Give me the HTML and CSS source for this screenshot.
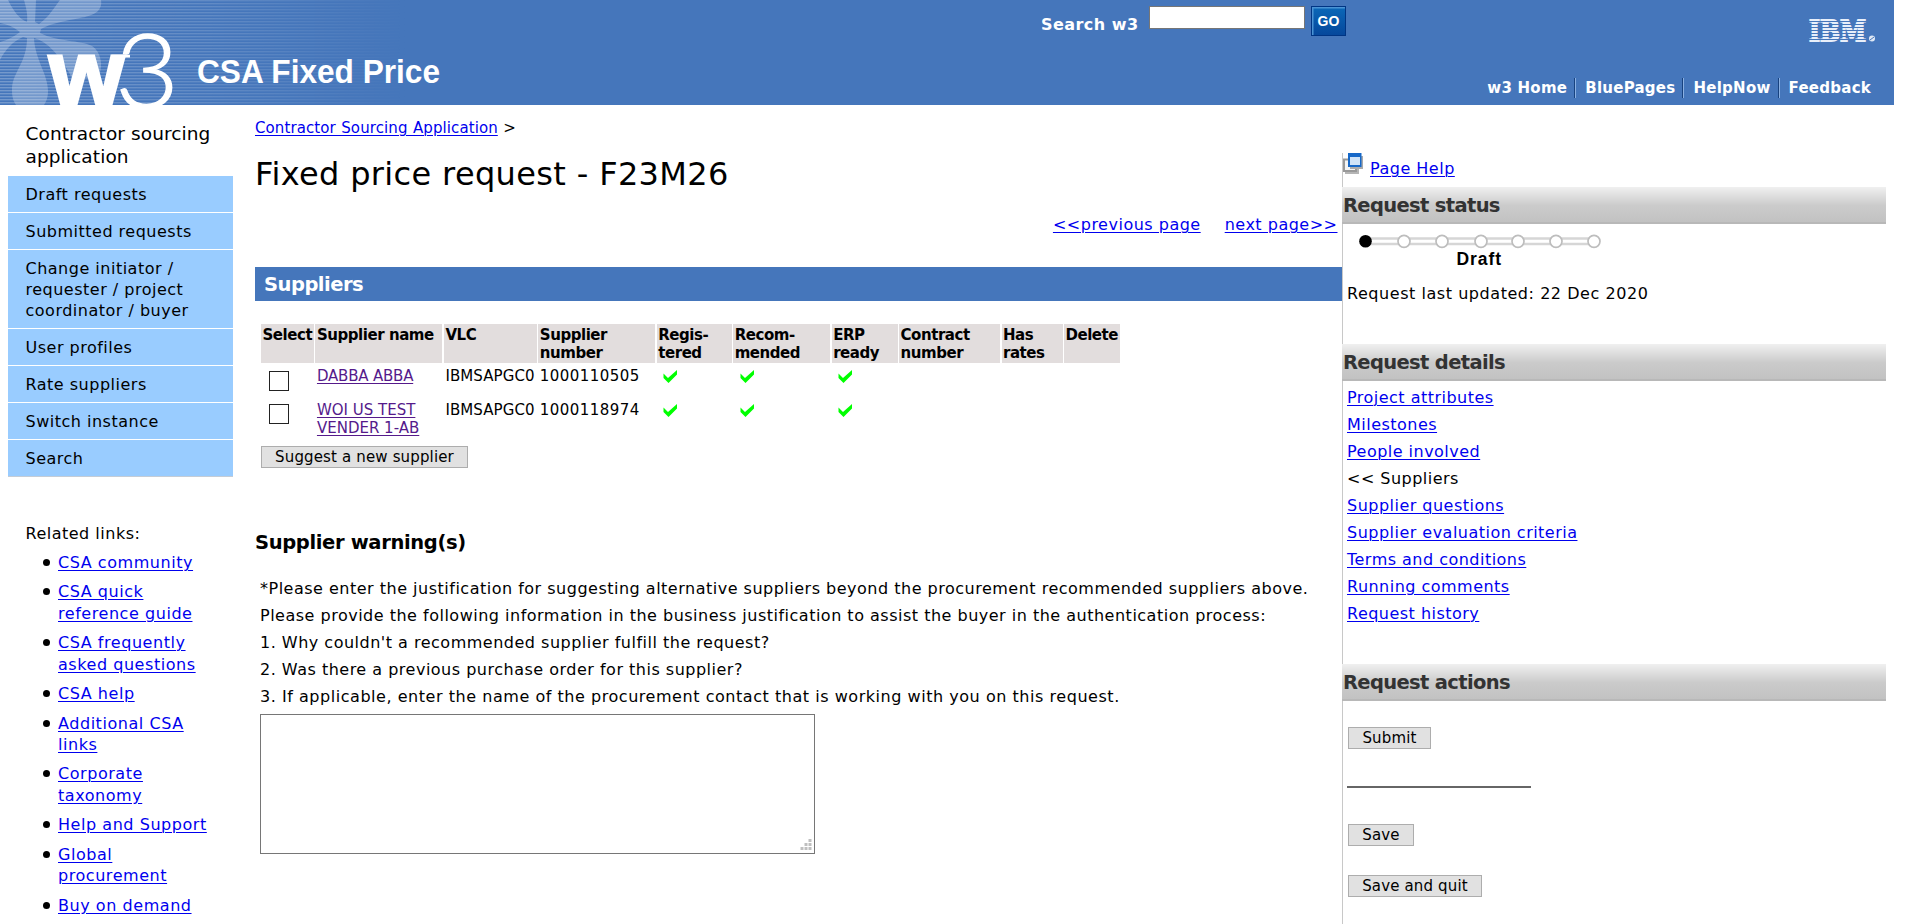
FILE: index.html
```html
<!DOCTYPE html>
<html lang="en">
<head>
<meta charset="utf-8">
<title>CSA Fixed Price - Suppliers</title>
<link rel="stylesheet" href="styles.css">
</head>
<body>
<header class="masthead">
  <svg class="brand" width="480" height="105" viewBox="0 0 480 105">
    <defs>
      <linearGradient id="fade" x1="0" x2="1" y1="0" y2="0"><stop offset="0" stop-color="#fff" stop-opacity=".26"/><stop offset=".45" stop-color="#fff" stop-opacity=".15"/><stop offset=".85" stop-color="#fff" stop-opacity="0"/></linearGradient>
      <pattern id="rows" width="4" height="3" patternUnits="userSpaceOnUse"><rect width="4" height="1.4" fill="#fff"/></pattern>
      <mask id="rowmask"><rect width="480" height="105" fill="url(#rows)"/></mask>
    </defs>
    <rect width="480" height="105" fill="url(#fade)" mask="url(#rowmask)"/>
    <path fill="#fff" fill-opacity=".25" d="M24 0H36L35 22L39 24C48 18 54 8 60 0H101C103 12 92 16 80 18C64 21 50 24 41 29L40 33C58 42 80 40 92 46C101 52 104 66 98 78H72C64 62 50 42 34 38C35 60 48 74 48 91C48 98 46 102 44 105H16C12 99 12 94 12 88C13 72 27 62 27 38L23 37C12 42 5 50 0 60V42C8 40 15 36 20 32C14 27 7 24 0 23V0H8C13 10 19 19 27 22C28 15 26 7 24 0Z"/>
    <text class="logo-w" x="49" y="105" textLength="75" lengthAdjust="spacingAndGlyphs">w</text>
    <path d="M112 54.800H130V57.500H112Z" fill="#fff"/>
    <text class="logo-3" x="115" y="107.500" textLength="64" lengthAdjust="spacingAndGlyphs">3</text>
    <text class="app-name" x="197" y="83" textLength="243" lengthAdjust="spacingAndGlyphs">CSA Fixed Price</text>
  </svg>
  <form class="search"><label for="q">Search w3</label><input id="q" type="text"><button class="go" type="button">GO</button></form>
  <div class="mast-right">
    <svg class="ibm-logo" width="68" height="24" viewBox="0 0 68 24">
      <text class="ibm" x="1" y="22" textLength="57" lengthAdjust="spacingAndGlyphs">IBM</text>
      <circle cx="64" cy="19.500" r="3" fill="#dfe8f5"/>
      <path d="M0 2.500H59M0 5.500H59M0 8.500H59M0 11.500H59M0 14.500H59M0 17.500H59M0 20.500H59M62 21L66 18" stroke="#4576bb" stroke-width="1"/>
    </svg>
    <nav class="mast-links"><a>w3 Home</a><a>BluePages</a><a>HelpNow</a><a>Feedback</a></nav>
  </div>
</header>
<div class="page">
  <aside class="left">
    <h2 class="app-title">Contractor sourcing application</h2>
    <ul class="menu">
      <li>Draft requests</li><li>Submitted requests</li><li>Change initiator /<br>requester / project<br>coordinator / buyer</li><li>User profiles</li><li>Rate suppliers</li><li>Switch instance</li><li>Search</li>
    </ul>
    <p class="related-title">Related links:</p>
    <ul class="related">
      <li><a href="#">CSA community</a></li>
      <li><a href="#">CSA quick<br>reference guide</a></li>
      <li><a href="#">CSA frequently<br>asked questions</a></li>
      <li><a href="#">CSA help</a></li>
      <li><a href="#">Additional CSA<br>links</a></li>
      <li><a href="#">Corporate<br>taxonomy</a></li>
      <li><a href="#">Help and Support</a></li>
      <li><a href="#">Global<br>procurement</a></li>
      <li><a href="#">Buy on demand</a></li>
    </ul>
  </aside>
  <main class="main">
    <p class="crumb"><a href="#">Contractor Sourcing Application</a> &gt;</p>
    <h1>Fixed price request - F23M26</h1>
    <p class="pager"><a href="#">&lt;&lt;previous page</a><a href="#">next page&gt;&gt;</a></p>
    <h2 class="bar">Suppliers</h2>
    <div class="grid">
      <div class="row head"><span>Select</span><span>Supplier name</span><span>VLC</span><span>Supplier<br>number</span><span>Regis-<br>tered</span><span>Recom-<br>mended</span><span>ERP<br>ready</span><span>Contract<br>number</span><span>Has<br>rates</span><span>Delete</span></div>
      <div class="row one"><span><i class="box"></i></span><span><a class="seen" href="#">DABBA ABBA</a></span><span class="vlc">IBMSAPGC0</span><span class="num">1000110505</span>
        <span><svg class="tick" viewBox="0 0 24 24"><path d="M4.500 7.500L9 12L18 4V8.500L9.500 17L4.500 12Z"/></svg></span>
        <span><svg class="tick" viewBox="0 0 24 24"><path d="M4.500 7.500L9 12L18 4V8.500L9.500 17L4.500 12Z"/></svg></span>
        <span><svg class="tick" viewBox="0 0 24 24"><path d="M4.500 7.500L9 12L18 4V8.500L9.500 17L4.500 12Z"/></svg></span></div>
      <div class="row two"><span><i class="box"></i></span><span><a class="seen" href="#">WOI US TEST<br>VENDER 1-AB</a></span><span class="vlc">IBMSAPGC0</span><span class="num">1000118974</span>
        <span><svg class="tick" viewBox="0 0 24 24"><path d="M4.500 7.500L9 12L18 4V8.500L9.500 17L4.500 12Z"/></svg></span>
        <span><svg class="tick" viewBox="0 0 24 24"><path d="M4.500 7.500L9 12L18 4V8.500L9.500 17L4.500 12Z"/></svg></span>
        <span><svg class="tick" viewBox="0 0 24 24"><path d="M4.500 7.500L9 12L18 4V8.500L9.500 17L4.500 12Z"/></svg></span></div>
    </div>
    <button class="btn suggest" type="button">Suggest a new supplier</button>
    <h3>Supplier warning(s)</h3>
    <div class="notes">
      <p>*Please enter the justification for suggesting alternative suppliers beyond the procurement recommended suppliers above.</p>
      <p>Please provide the following information in the business justification to assist the buyer in the authentication process:</p>
      <p>1. Why couldn't a recommended supplier fulfill the request?</p>
      <p>2. Was there a previous purchase order for this supplier?</p>
      <p class="last">3. If applicable, enter the name of the procurement contact that is working with you on this request.</p>
    </div>
    <div class="area"><svg width="12" height="12" viewBox="0 0 12 12" fill="#bfbfbf"><path d="M8.500 0h3v3h-3zM4.500 4h3v3h-3zM8.500 4h3v3h-3zM.5 8h3v3h-3zM4.500 8h3v3h-3zM8.500 8h3v3h-3z"/></svg></div>
  </main>
  <aside class="right">
    <p class="help"><svg width="20" height="21" viewBox="0 0 20 21"><path d="M2 7H16V21H2Z" fill="#b5b5b5"/><path d="M1 6.500H13V18H1Z" fill="#f4f4f4" stroke="#999" stroke-width="2"/><path d="M7 3H20V16H7Z" fill="#aaa"/><path d="M5 0H18.500V14H5Z" fill="#1668c8"/><path d="M7 4H17V12H7Z" fill="#cfe3f8"/></svg><a href="#">Page Help</a></p>
    <h2>Request status</h2>
    <div class="status">
      <svg width="258" height="26" viewBox="0 0 258 26">
        <path d="M22 13.500H251M22 19H251" stroke="#d6d6d6" stroke-width="2.400"/>
        <g fill="#fff" stroke="#bdbdbd" stroke-width="1.700"><circle cx="61" cy="16.300" r="6"/><circle cx="99" cy="16.300" r="6"/><circle cx="138" cy="16.300" r="6"/><circle cx="175" cy="16.300" r="6"/><circle cx="213" cy="16.300" r="6"/><circle cx="251" cy="16.300" r="6"/></g>
        <circle cx="22.500" cy="16.300" r="6.300"/>
      </svg>
      <b>Draft</b>
    </div>
    <p class="updated">Request last updated: 22 Dec 2020</p>
    <h2>Request details</h2>
    <ul class="details">
      <li><a href="#">Project attributes</a></li><li><a href="#">Milestones</a></li><li><a href="#">People involved</a></li><li>&lt;&lt; Suppliers</li><li><a href="#">Supplier questions</a></li><li><a href="#">Supplier evaluation criteria</a></li><li><a href="#">Terms and conditions</a></li><li><a href="#">Running comments</a></li><li><a href="#">Request history</a></li>
    </ul>
    <h2>Request actions</h2>
    <div class="actions"><button class="btn submit" type="button">Submit</button><i class="rule"></i><button class="btn save" type="button">Save</button><button class="btn quit" type="button">Save and quit</button></div>
  </aside>
</div>
</body>
</html>
```
FILE: styles.css
```css
* { box-sizing: border-box; }
html { overflow: hidden; }
body { margin: 0; height: 924px; overflow: hidden; background: #fff; color: #000; font: 16px/21.33px "DejaVu Sans", Verdana, sans-serif; letter-spacing: .5px; }
h1, h2, h3, p, ul { margin: 0; padding: 0; }
ul { list-style: none; }
a { color: #0000ee; text-underline-offset: 2px; text-decoration-thickness: 1px; white-space: nowrap; }
.masthead { width: 1894px; height: 105px; background: #4576bb; color: #fff; display: grid; grid-template-columns: 1041px 1fr auto; }
.brand { display: block; overflow: visible; letter-spacing: 0; }
.logo-w { font: bold 93px "Liberation Sans", Arial, sans-serif; fill: #fff; stroke: #fff; stroke-width: 3px; }
.logo-3 { font: 300 103px Lato, sans-serif; fill: #fff; stroke: #fff; stroke-width: 1.3px; }
.app-name { font: bold 33px "Liberation Sans", Arial, sans-serif; fill: #fff; }
.search { display: flex; align-items: flex-start; padding-top: 6px; font-weight: bold; }
.search label { width: 108px; padding-top: 8px; line-height: 22px; white-space: nowrap; letter-spacing: .45px; }
.search input { width: 156px; height: 23px; margin: 0 6px 0 0; padding: 0; border: 1px solid #767676; background: #fff; }
.go { width: 35px; height: 30px; padding: 0; border: 1px solid #003584; background: linear-gradient(#0b68b8, #06489c); box-shadow: inset 2px 2px 0 -0.5px #4a93d4; color: #fff; font: bold 14px "Liberation Sans", Arial, sans-serif; }
.mast-right { display: flex; flex-direction: column; justify-content: space-between; align-items: flex-end; padding: 19px 18px 7px 0; }
.ibm-logo { overflow: visible; letter-spacing: 0; }
.ibm { font: bold 28px "DejaVu Serif", serif; fill: #e8effa; stroke: #e8effa; stroke-width: 1.8px; }
.mast-links { display: flex; margin-right: -3px; }
.mast-links a { color: #fff; font-weight: bold; font-size: 15px; line-height: 20px; padding: 0 8px 0 9px; border-right: 1px solid #8ab0e2; box-shadow: inset -1px 0 #18427f; letter-spacing: .25px; }
.mast-links a:last-child { border: 0; box-shadow: none; }
.page { display: grid; grid-template-columns: 255px 1087px 544px; height: 819px; }
.left { padding: 17px 22px 0 8px; }
.app-title { font-size: 18.5px; font-weight: normal; line-height: 23px; padding: 0 0 8px 17.5px; letter-spacing: .1px; }
.menu { border-bottom: 1px solid #c4ccd6; }
.menu li { background: #99ccff; border-bottom: 1px solid #fff; padding: 8px 0 7px 17.5px; line-height: 21px; }
.menu li:last-child { border: 0; }
.related-title { padding: 46px 0 0 17.5px; }
.related { padding: 7.600px 0 0 50px; letter-spacing: .55px; }
.related li { margin-bottom: 8.200px; }
.related li::before { content: ""; display: inline-block; width: 7px; height: 7px; margin: 0 8px 0 -15px; border-radius: 50%; background: #000; vertical-align: 2px; }
.crumb { padding-top: 13px; font-size: 15px; letter-spacing: .1px; word-spacing: .5px; }
h1 { font-size: 32px; line-height: 40px; font-weight: normal; padding-top: 15px; letter-spacing: .35px; }
.pager { display: flex; justify-content: flex-end; gap: 24px; padding: 20px 4.5px 0 0; }
.bar { margin-top: 31px; height: 34px; line-height: 36px; background: #4576bb; color: #fff; padding-left: 9px; font-size: 19.500px; letter-spacing: -.5px; }
.grid { margin: 23px 0 0 6px; font-size: 15px; line-height: 18px; letter-spacing: -.2px; }
.row { display: grid; grid-template-columns: 53px 127px 93px 117px 75px 97px 66px 101px 61px 56px; column-gap: 1.450px; }
.row span { padding: 2px 0 0 1.5px; white-space: nowrap; }
.head { height: 39px; font-weight: bold; }
.row.head span { background: #e2dddd; letter-spacing: -.45px; padding-top: 2.5px; }
.one { height: 34px; padding-top: 2px; }
.two { height: 40px; padding-top: 2px; letter-spacing: 0; }
.vlc { letter-spacing: .1px; }
.num { letter-spacing: .45px; }
.seen { color: #551a8b; }
.box { display: block; width: 20px; height: 20px; margin: 4px 0 0 6px; border: 1px solid #222; }
.two .box { margin-top: 3px; }
.tick { display: block; width: 24px; height: 24px; margin: -1px 0 0 1px; fill: #00ff00; }
.btn { display: block; height: 22px; padding: 0; border: 1px solid #adadad; background: #e1e1e1; font: 15px/20px "DejaVu Sans", Verdana, sans-serif; letter-spacing: .15px; color: #000; white-space: nowrap; }
.suggest { width: 207px; margin: 9px 0 0 6px; }
h3 { margin-top: 62px; font-size: 19.500px; line-height: 26px; letter-spacing: -.35px; }
.notes { margin: 19px 0 0 5px; line-height: 27px; white-space: nowrap; }
.notes .last { letter-spacing: .54px; }
.area { margin: 4px 0 0 5px; width: 555px; height: 140px; border: 1px solid #767676; display: flex; align-items: flex-end; justify-content: flex-end; padding: 0 2px 2px; }
.right { margin-top: 48px; border-left: 1px solid #c8c8c8; }
.right h2 { height: 37px; margin-left: -1px; padding-left: 1px; font-size: 19.500px; line-height: 37px; letter-spacing: -.65px; color: #333; background: linear-gradient(#f0f0f0, #cbcbcb 50%, #c2c2c2 94%, #b8b8b8 95%); }
.help { height: 34px; display: flex; gap: 7px; }
.help a { padding-top: 5px; }
.status { height: 51px; padding-top: 1px; text-align: center; width: 271px; }
.status svg { display: block; }
.status b { display: block; padding-left: 1.5px; font: bold 17.500px/17px "Liberation Sans", Arial, sans-serif; letter-spacing: .9px; }
.updated { padding-left: 4px; height: 69px; padding-top: 8px; letter-spacing: .55px; }
.details { padding: 3px 0 0 4px; height: 283px; line-height: 27px; letter-spacing: .48px; }
.details li { height: 27px; }
.actions { padding: 26px 0 0 5px; }
.submit { width: 83px; }
.rule { display: block; width: 184px; height: 2px; margin: 37px 0 36px -1px; background: #666; }
.save { width: 66px; margin-bottom: 29px; }
.quit { width: 134px; }
```
